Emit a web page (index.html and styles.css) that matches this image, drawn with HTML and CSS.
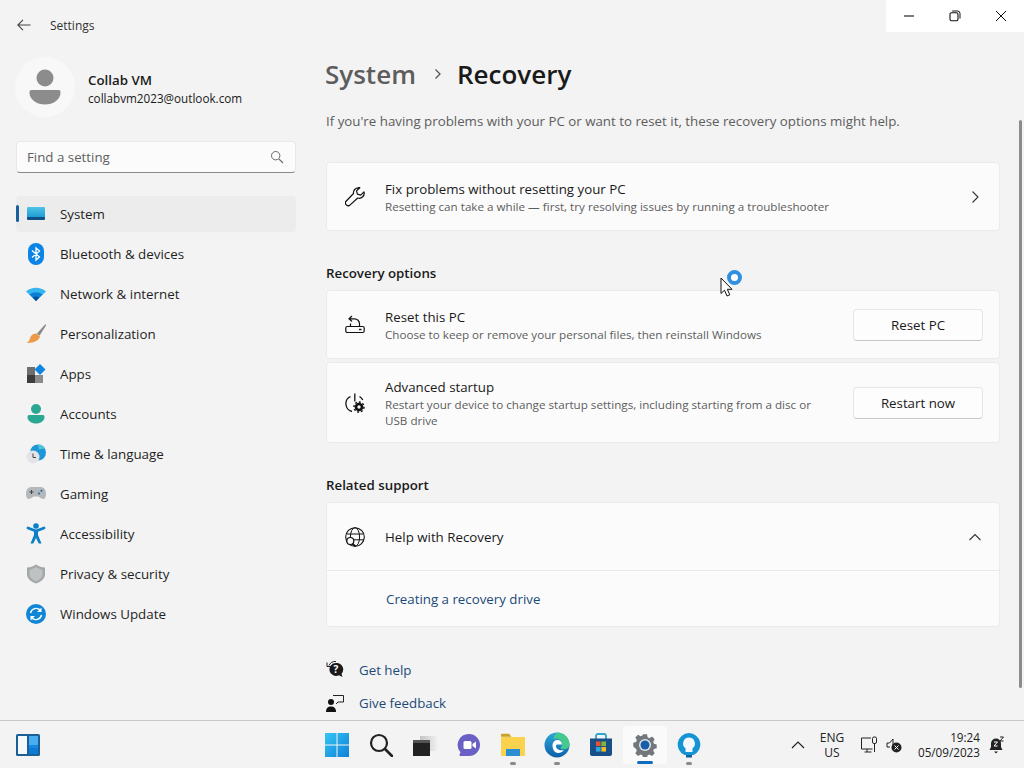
FILE: index.html
```html
<!DOCTYPE html>
<html lang="en">
<head>
<meta charset="utf-8">
<title>Settings</title>
<link rel="stylesheet" href="styles.css">
</head>
<body>
<div class="window">
  <aside class="sidebar">
    <div class="titlebar">
      <svg class="back" width="16" height="16" viewBox="0 0 16 16"><path d="M14.5 8H2M7 2.8 1.8 8 7 13.2" fill="none" stroke="#444" stroke-width="1.1"/></svg>
      <span class="app-name">Settings</span>
    </div>
    <div class="profile">
      <div class="avatar">
        <svg width="32" height="36" viewBox="0 0 32 36"><circle cx="16" cy="9" r="8.5" fill="#8c8c8c"/><path d="M2 21h28c1 0 1.500 1 1.500 2.500C31.500 31 24 35.500 16 35.500S.5 31 .5 23.500C.5 22 1 21 2 21z" fill="#8c8c8c"/></svg>
      </div>
      <div class="who">
        <div class="who-name">Collab VM</div>
        <div class="who-mail">collabvm2023@outlook.com</div>
      </div>
    </div>
    <div class="search">
      <span class="search-text">Find a setting</span>
      <svg width="14" height="14" viewBox="0 0 14 14"><circle cx="5.700" cy="5.700" r="4.200" fill="none" stroke="#666" stroke-width="1"/><path d="M8.800 8.800 13 13" stroke="#666" stroke-width="1.100"/></svg>
    </div>
    <nav class="nav">
      <a class="nav-item active">
        <svg class="nav-icon" width="20" height="20" viewBox="0 0 20 20"><defs><linearGradient id="sys" x1="0" y1="0" x2="0" y2="1"><stop offset="0" stop-color="#4fc3e8"/><stop offset="1" stop-color="#1a9ad0"/></linearGradient></defs><rect x="1" y="3" width="18" height="11" rx="1" fill="url(#sys)"/><rect x="1" y="13" width="18" height="3" rx="1" fill="#0f4f86"/></svg>
        <span>System</span>
      </a>
      <a class="nav-item">
        <svg class="nav-icon" width="20" height="24" viewBox="0 0 20 24"><rect x="2" y="1" width="16" height="22" rx="8" fill="#0a84e6"/><path d="M6 8.500 13.500 15 10 18V6l3.500 3L6 15.500" fill="none" stroke="#fff" stroke-width="1.300"/></svg>
        <span>Bluetooth &amp; devices</span>
      </a>
      <a class="nav-item">
        <svg class="nav-icon" width="20" height="20" viewBox="0 0 20 20"><path d="M0 7.500C5.500 2.500 14.500 2.500 20 7.500L10 17z" fill="#37b5ee"/><path d="M3.500 10.500C7.500 7.500 12.500 7.500 16.500 10.500L10 17z" fill="#0a7fd6"/><path d="M6.800 13.500C8.800 12.300 11.200 12.300 13.200 13.500L10 17z" fill="#0a4f9a"/></svg>
        <span>Network &amp; internet</span>
      </a>
      <a class="nav-item">
        <svg class="nav-icon" width="20" height="20" viewBox="0 0 20 20"><path d="M19.500 0 11 9.500l2.500 2.300L20 1.500z" fill="#8a8a8a"/><path d="M10.500 9.500 14 12.500C13 16 9 19.200 0.500 19c3-1.500 3-3.500 4-6 1-2.500 3.500-3.500 6-3.500z" fill="#ed9a47"/></svg>
        <span>Personalization</span>
      </a>
      <a class="nav-item">
        <svg class="nav-icon" width="20" height="20" viewBox="0 0 20 20"><rect x="1" y="3" width="8" height="8" fill="#6e6e6e"/><rect x="1" y="11" width="8" height="8" fill="#3c3c3c"/><rect x="9" y="11" width="8" height="8" fill="#8a8a8a"/><path d="M14 0 19.500 5.500 14 11 8.500 5.500z" fill="#0f86e0"/></svg>
        <span>Apps</span>
      </a>
      <a class="nav-item">
        <svg class="nav-icon" width="20" height="20" viewBox="0 0 20 20"><circle cx="10" cy="5" r="5" fill="#2ba894"/><path d="M3 11h14c1 0 1.500.7 1.500 2 0 4-4 6.500-8.500 6.500S1.500 17 1.500 13c0-1.300.5-2 1.500-2z" fill="#2ba894"/></svg>
        <span>Accounts</span>
      </a>
      <a class="nav-item">
        <svg class="nav-icon" width="20" height="20" viewBox="0 0 20 20"><circle cx="12" cy="8.500" r="8" fill="#1f97d6"/><path d="M12 .5a8 8 0 0 1 7 4l-6 1z" fill="#4fc3d8"/><circle cx="7" cy="13" r="6.500" fill="#e4e4e8"/><path d="M7 9.500V13.500H10" fill="none" stroke="#444" stroke-width="1"/></svg>
        <span>Time &amp; language</span>
      </a>
      <a class="nav-item">
        <svg class="nav-icon" width="20" height="20" viewBox="0 0 20 20"><path d="M5 3h10c3 0 5 3 5 7 0 3-1 5-3 5-2.500 0-3-2.500-5-2.500H8C6 12.500 5.500 15 3 15c-2 0-3-2-3-5 0-4 2-7 5-7z" fill="#b4b8bc"/><path d="M3.500 8h4M5.500 6v4" stroke="#444" stroke-width="1"/><circle cx="13" cy="9.500" r="1.100" fill="#2a6ea8"/><circle cx="15.500" cy="6.800" r="1.100" fill="#2a6ea8"/></svg>
        <span>Gaming</span>
      </a>
      <a class="nav-item">
        <svg class="nav-icon" width="20" height="22" viewBox="0 0 20 22"><circle cx="10" cy="3" r="2.800" fill="#0d7fc8"/><path d="M2 5 10 8 18 5" fill="none" stroke="#0d7fc8" stroke-width="2.800" stroke-linecap="round"/><path d="M8 7h4v5l3.500 8.500h-2.800L10 15l-2.700 5.500H4.500L8 12z" fill="#0d7fc8"/></svg>
        <span>Accessibility</span>
      </a>
      <a class="nav-item">
        <svg class="nav-icon" width="20" height="20" viewBox="0 0 20 20"><path d="M10 0.500C7 2.500 4.500 3.500 1 3.500V10c0 4.500 4 8 9 9.500 5-1.500 9-5 9-9.500V3.500c-3.500 0-6-1-9-3z" fill="#a3a7a8"/><path d="M10 3C7.500 4.500 5.500 5.500 3.500 5.700V10c0 3.500 3 6 6.500 7.200 3.500-1.200 6.500-3.700 6.500-7.200V5.700C14.500 5.500 12.500 4.500 10 3z" fill="#bfc2c2"/></svg>
        <span>Privacy &amp; security</span>
      </a>
      <a class="nav-item">
        <svg class="nav-icon" width="20" height="20" viewBox="0 0 20 20"><circle cx="10" cy="10" r="10" fill="#0f86d8"/><path d="M4.500 9A5.700 5.700 0 0 1 14.500 6.500M15.500 11A5.700 5.700 0 0 1 5.500 13.500" fill="none" stroke="#fff" stroke-width="1.400"/><path d="M15.500 3.500V8H11zM4.500 16.500V12H9z" fill="#fff"/></svg>
        <span>Windows Update</span>
      </a>
    </nav>
  </aside>

  <main class="main">
    <h1 class="crumb">
      <span class="crumb-parent">System</span>
      <svg class="crumb-sep" width="10" height="12" viewBox="0 0 10 12"><path d="M2.500 1.500 7 6 2.500 10.500" fill="none" stroke="#555" stroke-width="1.300"/></svg>
      <span class="crumb-current">Recovery</span>
    </h1>
    <p class="intro">If you're having problems with your PC or want to reset it, these recovery options might help.</p>

    <section class="card row first">
      <svg class="row-icon" width="20" height="20" viewBox="0 0 20 20"><path d="M13.500 0.800A5 5 0 0 0 8.500 6.500L1.300 14a2.600 2.600 0 0 0 3.900 3.900L12.700 11a5 5 0 0 0 6.300-6.200l-3.300 3.300-3.300-1-.9-3.200 3.300-3.200a5 5 0 0 0-1.300-.9z" fill="none" stroke="#111" stroke-width="1.200" stroke-linejoin="round"/></svg>
      <div class="row-text">
        <div class="row-title">Fix problems without resetting your PC</div>
        <div class="row-sub">Resetting can take a while — first, try resolving issues by running a troubleshooter</div>
      </div>
      <svg class="chev" width="12" height="14" viewBox="0 0 12 14"><path d="M3.500 1.500 9 7 3.500 12.500" fill="none" stroke="#333" stroke-width="1.100"/></svg>
    </section>

    <h2 class="section">Recovery options</h2>
    <section class="card row">
      <svg class="row-icon" width="20" height="20" viewBox="0 0 20 20"><path d="M7 1 4 3.800 7 6.500M4.300 3.800H9.500a5 5 0 0 1 5 5v2.700M5.500 11.500V8.500" fill="none" stroke="#111" stroke-width="1.200"/><rect x=".8" y="11.500" width="18.400" height="6" rx="1.500" fill="none" stroke="#111" stroke-width="1.200"/><path d="M14 14.500h2.500" stroke="#111" stroke-width="1.400"/></svg>
      <div class="row-text">
        <div class="row-title">Reset this PC</div>
        <div class="row-sub">Choose to keep or remove your personal files, then reinstall Windows</div>
      </div>
      <button class="btn" type="button">Reset PC</button>
    </section>
    <section class="card row tall">
      <svg class="row-icon" width="20" height="20" viewBox="0 0 20 20"><path d="M5.500 3.500A8 8 0 0 0 7 18.500M14.500 3.500c1.500 1 2.500 2 3.300 3.500M9.800 .5v8" fill="none" stroke="#111" stroke-width="1.300"/><circle cx="14" cy="14" r="3" fill="none" stroke="#111" stroke-width="2.600"/><circle cx="14" cy="14" r="5" fill="none" stroke="#111" stroke-width="1.500" stroke-dasharray="1.900 1.900"/></svg>
      <div class="row-text">
        <div class="row-title">Advanced startup</div>
        <div class="row-sub narrow">Restart your device to change startup settings, including starting from a disc or USB drive</div>
      </div>
      <button class="btn" type="button">Restart now</button>
    </section>

    <h2 class="section">Related support</h2>
    <section class="card">
      <div class="row help-head">
        <svg class="row-icon" width="20" height="20" viewBox="0 0 20 20"><circle cx="10" cy="10" r="9.300" fill="none" stroke="#111" stroke-width="1.100"/><ellipse cx="10" cy="10" rx="4.600" ry="9.300" fill="none" stroke="#111" stroke-width="1"/><path d="M1.500 7H18.500M1.500 12.800H18.500" stroke="#111" stroke-width="1"/><circle cx="5.300" cy="14" r="3.500" fill="#fbfbfb" stroke="#111" stroke-width="1.200"/><path d="M7.800 16.500 10.500 19.300" stroke="#111" stroke-width="1.300"/></svg>
        <div class="row-text"><div class="row-title">Help with Recovery</div></div>
        <svg class="chev" width="12" height="14" viewBox="0 0 12 14"><path d="M.5 10 6 4.500 11.500 10" fill="none" stroke="#333" stroke-width="1.100"/></svg>
      </div>
      <div class="help-body"><a class="link">Creating a recovery drive</a></div>
    </section>

    <div class="foot">
      <div class="foot-row">
        <svg class="foot-icon" width="18" height="20" viewBox="0 0 18 20"><path d="M3 5.500A7 7 0 0 1 10 1.500M1 2.500v4h4" fill="none" stroke="#222" stroke-width="1"/><path d="M10 3a6.500 6.500 0 0 0-5.500 10c1 1.500 3.500 3 5.500 3 1 0 2-.2 3-.7l3.500 1.700-1-3.200A6.500 6.500 0 0 0 10 3z" fill="#1a1a1a"/><text class="q" x="10" y="13" text-anchor="middle">?</text></svg>
        <a class="link">Get help</a>
      </div>
      <div class="foot-row">
        <svg class="foot-icon" width="18" height="20" viewBox="0 0 18 20"><circle cx="5" cy="9" r="3" fill="#111"/><path d="M0 19c0-4 2-5.500 5-5.500s5 1.500 5 5.500z" fill="#111"/><path d="M7 2.500h10.500V9H12l-2 2" fill="none" stroke="#222" stroke-width="1"/></svg>
        <a class="link">Give feedback</a>
      </div>
    </div>
  </main>

  <div class="controls">
    <span class="ctl"><svg width="12" height="12" viewBox="0 0 12 12"><path d="M1 6h10" stroke="#111" stroke-width="1.100"/></svg></span>
    <span class="ctl"><svg width="12" height="12" viewBox="0 0 12 12"><rect x="1" y="2.800" width="8" height="8" rx="1.500" fill="none" stroke="#111" stroke-width="1.100"/><path d="M3.200 1h5.300a2.500 2.500 0 0 1 2.500 2.500v5" fill="none" stroke="#111" stroke-width="1"/></svg></span>
    <span class="ctl"><svg width="12" height="12" viewBox="0 0 12 12"><path d="M1 1 11 11M11 1 1 11" stroke="#111" stroke-width="1"/></svg></span>
  </div>
  <div class="scroll-thumb"></div>
  <div class="pointer">
    <svg width="24" height="24" viewBox="0 0 24 24"><path d="M1 1v15.500l3.500-3.300 2.500 5.800 2.800-1.200-2.500-5.500H12z" fill="#fff" stroke="#111" stroke-width="1"/></svg>
    <span class="busy"></span>
  </div>
</div>

<footer class="taskbar">
  <div class="widgets">
    <svg width="26" height="24" viewBox="0 0 26 24"><rect x="1" y="1" width="24" height="22" rx="1.500" fill="#1b5f96"/><rect x="3" y="3" width="9" height="18" fill="#f6f8fb"/><rect x="14" y="3" width="9" height="18" fill="#49aef0"/><rect x="14" y="12" width="9" height="3" fill="#1688e2"/><rect x="14" y="15" width="9" height="6" fill="#0f7ad6"/></svg>
  </div>
  <div class="apps">
    <span class="app">
      <svg width="24" height="24" viewBox="0 0 24 24"><defs><linearGradient id="win" x1="0" y1="0" x2="1" y2="1"><stop offset="0" stop-color="#35c6f4"/><stop offset="1" stop-color="#0f80d8"/></linearGradient></defs><path d="M0 0h11.500v11.500H0zM12.500 0H24v11.500H12.500zM0 12.500h11.500V24H0zM12.500 12.500H24V24H12.500z" fill="url(#win)"/></svg>
    </span>
    <span class="app">
      <svg width="24" height="24" viewBox="0 0 24 24"><circle cx="10" cy="10" r="8" fill="none" stroke="#222" stroke-width="2.200"/><path d="M16 16 23 23" stroke="#222" stroke-width="2.600" stroke-linecap="round"/></svg>
    </span>
    <span class="app">
      <svg width="26" height="24" viewBox="0 0 26 24"><defs><linearGradient id="tv" x1="0" y1="0" x2="1" y2="0"><stop offset="0" stop-color="#c4c4c4"/><stop offset="1" stop-color="#efefef"/></linearGradient></defs><rect x="8" y="3" width="17" height="15" fill="url(#tv)"/><rect x="1" y="7" width="17" height="16" fill="#222"/><rect x="1" y="7" width="17" height="3" fill="#555"/></svg>
    </span>
    <span class="app">
      <svg width="24" height="24" viewBox="0 0 24 24"><path d="M12 1a11 11 0 0 1 0 22H3.500c-.8 0-1.200-.5-1-1.200l1-2.500A11 11 0 0 1 12 1z" fill="#6a5fc4"/><rect x="6.500" y="8" width="8" height="8" rx="1.500" fill="#fff"/><path d="M15.500 11 19 8.500v7L15.500 13z" fill="#fff"/></svg>
    </span>
    <span class="app">
      <svg width="26" height="24" viewBox="0 0 26 24"><path d="M1 2c0-.8.4-1.200 1-1.200h7l2.500 3H1z" fill="#c9a227"/><rect x="1" y="4" width="24" height="19" rx="1" fill="#fbd24e"/><rect x="6" y="16" width="14" height="7" fill="#2a8fd0"/></svg>
      <i class="dot"></i>
    </span>
    <span class="app">
      <svg width="26" height="26" viewBox="0 0 26 26"><defs><linearGradient id="edge" x1="0" y1="0" x2="0" y2="1"><stop offset="0" stop-color="#2ea8dc"/><stop offset="1" stop-color="#0b5fa8"/></linearGradient></defs><circle cx="13" cy="13" r="12.500" fill="url(#edge)"/><path d="M14 .6C20.500 1 25.500 6.500 25.500 12.500c0 3-2.500 4.800-5.500 4.800-1.800 0-3.500-.5-3.800-1.300 1.300-.8 1.800-2 1.800-3.500C18 9 15.500 6.500 12 6.500c-1 0-2 .2-2.800.6C10 3.500 12 1.500 14 .6z" fill="#45c98c"/><path d="M8.500 13.500C8.500 10 11 8 13.500 8s4.500 2 4.500 4.500h-4.500c-1 0-1.500.5-1.500 1.500 0 3 3.500 5 8 4-1.500 2-3.500 3-6 3-3.500 0-5.500-4-5.500-7.500z" fill="#fff"/></svg>
      <i class="dot"></i>
    </span>
    <span class="app">
      <svg width="24" height="24" viewBox="0 0 24 24"><path d="M7 6V3a2 2 0 0 1 2-2h6a2 2 0 0 1 2 2v3" fill="none" stroke="#2fa6c8" stroke-width="1.800"/><path d="M1 5.500h22V21a2 2 0 0 1-2 2H3a2 2 0 0 1-2-2z" fill="#174f86"/><rect x="7" y="8.500" width="4.600" height="4.600" fill="#e9502e"/><rect x="12.400" y="8.500" width="4.600" height="4.600" fill="#7cb93a"/><rect x="7" y="14" width="4.600" height="4.600" fill="#2ca6e0"/><rect x="12.400" y="14" width="4.600" height="4.600" fill="#f6b91f"/></svg>
    </span>
    <span class="app current">
      <svg width="24" height="24" viewBox="0 0 24 24"><path d="M9.800.5h4.400l.7 3.300 2 .9 2.900-1.800 3 3.100-1.700 2.800.8 2.100 3.100.8v4.300l-3.100.7-.8 2 1.700 2.900-3 3-2.900-1.700-2 .8-.7 3.100H9.800l-.7-3.100-2-.8-2.900 1.700-3-3 1.700-2.900-.8-2L-1 14v-4.300l3.100-.8.800-2.100L1.200 4l3-3.100 2.900 1.800 2-.9z" transform="translate(1.200 .9) scale(.9)" fill="#73767a"/><circle cx="12" cy="12" r="6" fill="#dfe6ee"/><circle cx="12" cy="12" r="4.500" fill="#1a5ea8"/></svg>
      <i class="bar"></i>
    </span>
    <span class="app">
      <svg width="24" height="26" viewBox="0 0 24 26"><path d="M12 1a11.500 11.500 0 0 1 4.500 22H7.500A11.500 11.500 0 0 1 12 1z" fill="#1594d4"/><path d="M12 5.500a6 6 0 0 1 3.500 10.800V20h-7v-3.700A6 6 0 0 1 12 5.500z" fill="#f2f8fc"/><path d="M9 23h6v2.500H9z" fill="#0e5f9a"/></svg>
      <i class="dot"></i>
    </span>
  </div>
  <div class="tray">
    <svg class="tray-chev" width="14" height="14" viewBox="0 0 14 14"><path d="M1 10 7 4l6 6" fill="none" stroke="#222" stroke-width="1.200"/></svg>
    <div class="lang"><span>ENG</span><span>US</span></div>
    <svg class="tray-net" width="18" height="18" viewBox="0 0 18 18"><path d="M11 2H1.500v11h11M4.500 16h7M7 13v3" fill="none" stroke="#222" stroke-width="1"/><rect x="12.500" y="1" width="4" height="6.500" rx="1.500" fill="none" stroke="#222"/><path d="M14.500 7.500V16" stroke="#222"/></svg>
    <svg class="tray-vol" width="16" height="16" viewBox="0 0 16 16"><path d="M1 6h2.500L7 2v6M1 6v4h3" fill="none" stroke="#222" stroke-width="1"/><circle cx="10.500" cy="10.500" r="5" fill="#222"/><path d="M8.500 8.500l4 4M12.500 8.500l-4 4" stroke="#fff" stroke-width="1"/></svg>
    <div class="clock"><span>19:24</span><span>05/09/2023</span></div>
    <svg class="tray-bell" width="16" height="18" viewBox="0 0 16 18"><path d="M7 2.500a5 5 0 0 0-5 5V11l-1.500 3h13L12 11V7.500a5 5 0 0 0-5-5z" fill="#222"/><path d="M5 15.500h4L7 17.500z" fill="#222"/><path d="M5 6h3.500M8.500 6 5 10h3.500" fill="none" stroke="#fff" stroke-width="1"/><path d="M11 1h3.500L11 5h3.500" fill="none" stroke="#222" stroke-width="1"/></svg>
  </div>
</footer>
</body>
</html>
```

FILE: styles.css
```css
* { box-sizing: border-box; }
html, body { margin: 0; padding: 0; }
body {
  width: 1024px;
  height: 768px;
  overflow: hidden;
  background: #f3f3f3;
  color: #1a1a1a;
  font-family: "Open Sans", "Liberation Sans", sans-serif;
  font-size: 13.300px;
}
svg { display: block; flex: none; }

.window { position: relative; display: flex; height: 720px; overflow: hidden; background: #f3f3f3; }

/* sidebar */
.sidebar { width: 310px; padding-left: 16px; flex: none; }
.titlebar { display: flex; align-items: center; height: 49px; padding-top: 1px; }
.app-name { margin-left: 18px; font-size: 12px; color: #333; }
.profile { display: flex; align-items: center; height: 60px; margin-top: 8px; }
.avatar {
  width: 60px; height: 60px; margin-left: -1px; border-radius: 50%;
  background: #f8f8f8; display: flex; align-items: center; justify-content: center;
}
.who { margin: 4px 0 0 13px; }
.who-name { font-size: 13.300px; font-weight: 600; line-height: 18px; }
.who-mail { font-size: 11.700px; line-height: 18px; }
.search {
  display: flex; align-items: center; justify-content: space-between;
  width: 280px; height: 32px; margin-top: 24px; padding: 0 11px 0 10px;
  background: #fbfbfb; border: 1px solid #e8e8e8; border-bottom-color: #8a8a8a; border-radius: 4px;
}
.search-text { color: #5f5f5f; font-size: 13.300px; }
.nav { display: flex; flex-direction: column; gap: 4px; margin-top: 23px; }
.nav-item {
  position: relative; display: flex; align-items: center; width: 280px; height: 36px;
  padding-left: 10px; border-radius: 4px; color: #1f1f1f; font-size: 13.350px;
}
.nav-item span { margin-left: 14px; }
.nav-icon { width: 20px; }
.active { background: #ececec; }
.active::before {
  content: ""; position: absolute; left: 0; top: 9px; width: 3px; height: 17px;
  border-radius: 2px; background: #1a5f9e;
}

/* main */
.main { width: 674px; margin-left: 16px; flex: none; padding-top: 54px; }
.crumb { display: flex; align-items: center; height: 40px; margin: 0 0 0 -1px; font-size: 26px; font-weight: 600; }
.crumb-parent { color: #5d5d5d; }
.crumb-sep { margin: 0 14px 0 17px; }
.crumb-current { color: #1a1a1a; }
.intro { margin: 17px 0 0; line-height: 20px; color: #5d5d5d; font-size: 13.300px; }
.card { background: #fbfbfb; border: 1px solid #ebebeb; border-radius: 4px; }
.row { display: flex; align-items: center; height: 69px; padding: 0 16px 0 18px; }
.first { margin-top: 31px; }
.tall { height: 81px; margin-top: 3px; }
.row-icon { margin-right: 20px; }
.row-text { flex: 1; padding-top: 1px; }
.row-title { font-size: 13.300px; line-height: 18px; color: #1a1a1a; }
.row-sub { font-size: 11.650px; line-height: 16px; margin-top: 1px; color: #5d5d5d; }
.narrow { max-width: 450px; }
.chev { margin-right: 2px; }
.btn {
  width: 130px; height: 32px; background: #fdfdfd; border: 1px solid #e6e6e6; border-bottom-color: #c8c8c8;
  border-radius: 4px; font: inherit; font-size: 13.300px; color: #1a1a1a; padding: 0;
}
.section { margin: 32px 0 7px; font-size: 13.300px; font-weight: 600; line-height: 20px; color: #1a1a1a; }
.help-head { height: 68px; border-bottom: 1px solid #e9e9e9; }
.help-body { height: 55px; display: flex; align-items: center; padding-left: 59px; }
.link { color: #1c4a78; font-size: 13.300px; }
.foot { display: flex; flex-direction: column; gap: 13px; margin-top: 33px; }
.foot-row { display: flex; align-items: center; height: 20px; }
.foot-icon { margin-right: 15px; }
.q { font-size: 10px; font-weight: 700; fill: #fff; }

/* overlays */
.controls { position: absolute; top: 0; right: 0; display: flex; width: 138px; height: 32px; background: #fff; }
.ctl { width: 46px; display: flex; align-items: center; justify-content: center; }
.scroll-thumb { position: absolute; left: 1019px; top: 120px; width: 3px; height: 568px; border-radius: 2px; background: #8c8c8c; }
.pointer { position: absolute; left: 720px; top: 277px; width: 26px; height: 24px; }
.busy { position: absolute; left: 7px; top: -7px; width: 15px; height: 15px; border-radius: 50%; border: 4px solid #2f8fe0; background: #fff; }

/* taskbar */
.taskbar {
  position: relative; display: flex; height: 48px; align-items: center;
  background: #f3f3f3; border-top: 1px solid #c9c9c9; font-size: 11.700px;
}
.widgets { width: 315px; padding-left: 15px; }
.apps { display: flex; }
.app { position: relative; display: flex; width: 44px; height: 38px; align-items: center; justify-content: center; }
.current { background: #fafafa; border-radius: 4px; }
.dot { position: absolute; bottom: -1px; left: 19px; width: 6px; height: 3px; border-radius: 2px; background: #8a8a8a; }
.bar { position: absolute; bottom: 0; left: 14px; width: 16px; height: 3px; border-radius: 2px; background: #0f6cbd; }
.tray { display: flex; align-items: center; margin-left: 80px; color: #222; }
.lang { display: flex; flex-direction: column; align-items: center; width: 36px; margin-left: 9px; line-height: 15px; font-size: 12px; }
.tray-net { margin-left: 10px; }
.tray-vol { margin-left: 8px; }
.clock { display: flex; flex-direction: column; align-items: flex-end; width: 78px; line-height: 15px; }
.tray-bell { margin-left: 9px; }
```
